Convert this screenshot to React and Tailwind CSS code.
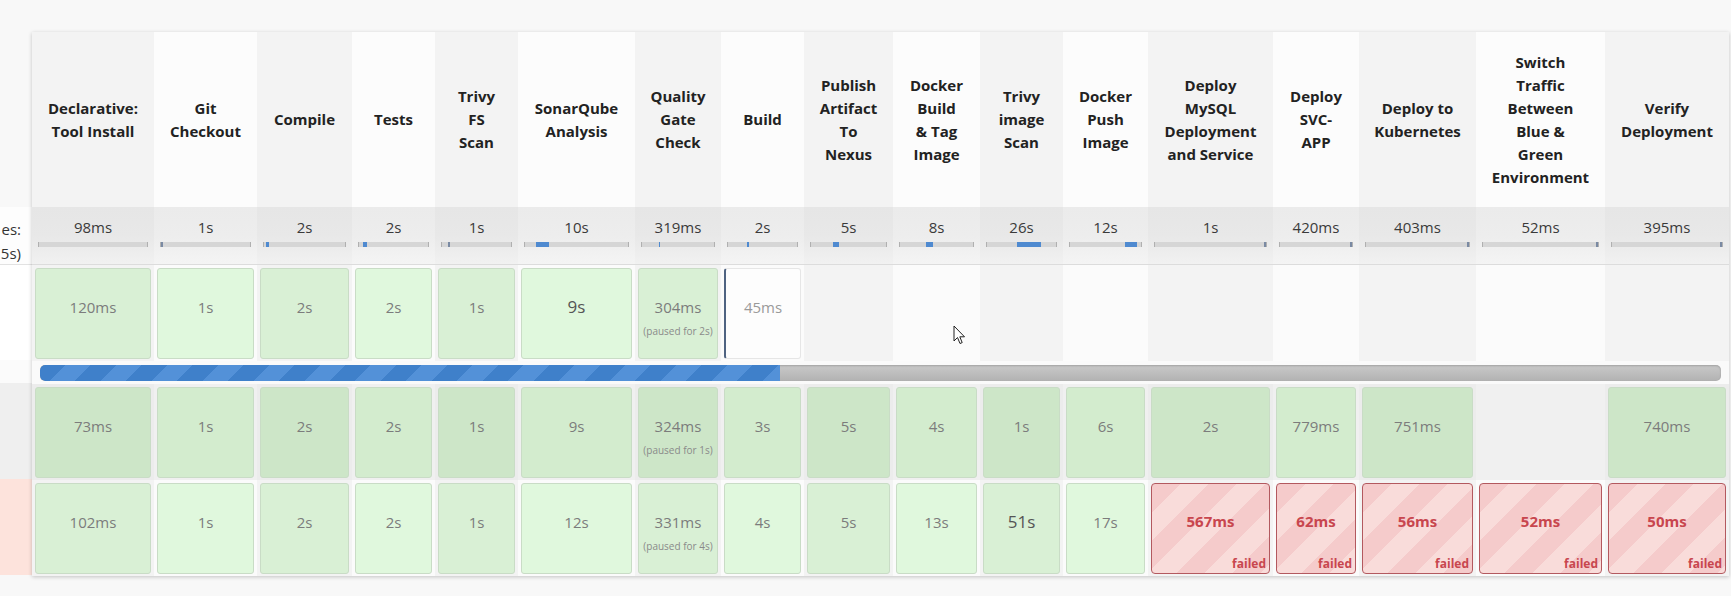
import React from "react";

const cols = [
  { name: ["Declarative:", "Tool Install"], avg: "98ms", mark: null },
  { name: ["Git", "Checkout"], avg: "1s", mark: [0, 2, true] },
  { name: ["Compile"], avg: "2s", mark: [2, 3] },
  { name: ["Tests"], avg: "2s", mark: [6, 4] },
  { name: ["Trivy", "FS", "Scan"], avg: "1s", mark: [8, 2, true] },
  { name: ["SonarQube", "Analysis"], avg: "10s", mark: [11, 13] },
  { name: ["Quality", "Gate", "Check"], avg: "319ms", mark: [24, 1] },
  { name: ["Build"], avg: "2s", mark: [27, 2] },
  { name: ["Publish", "Artifact", "To", "Nexus"], avg: "5s", mark: [29, 6] },
  { name: ["Docker", "Build", "& Tag", "Image"], avg: "8s", mark: [36, 7] },
  { name: ["Trivy", "image", "Scan"], avg: "26s", mark: [44, 24] },
  { name: ["Docker", "Push", "Image"], avg: "12s", mark: [78, 12] },
  { name: ["Deploy", "MySQL", "Deployment", "and Service"], avg: "1s", mark: [98, 2, true] },
  { name: ["Deploy", "SVC-", "APP"], avg: "420ms", mark: [97, 2, true] },
  { name: ["Deploy to", "Kubernetes"], avg: "403ms", mark: [98, 2, true] },
  { name: ["Switch", "Traffic", "Between", "Blue &", "Green", "Environment"], avg: "52ms", mark: [98, 2, true] },
  { name: ["Verify", "Deployment"], avg: "395ms", mark: [98, 2, true] },
];

const row1 = [
  { t: "120ms" }, { t: "1s" }, { t: "2s" }, { t: "2s" }, { t: "1s" },
  { t: "9s", big: true }, { t: "304ms", p: "(paused for 2s)" }, { t: "45ms", run: true },
  null, null, null, null, null, null, null, null, null,
];
const row2 = [
  { t: "73ms" }, { t: "1s" }, { t: "2s" }, { t: "2s" }, { t: "1s" },
  { t: "9s" }, { t: "324ms", p: "(paused for 1s)" }, { t: "3s" }, { t: "5s" }, { t: "4s" },
  { t: "1s" }, { t: "6s" }, { t: "2s" }, { t: "779ms" }, { t: "751ms" }, null, { t: "740ms" },
];
const row3 = [
  { t: "102ms" }, { t: "1s" }, { t: "2s" }, { t: "2s" }, { t: "1s" },
  { t: "12s" }, { t: "331ms", p: "(paused for 4s)" }, { t: "4s" }, { t: "5s" }, { t: "13s" },
  { t: "51s", big: true }, { t: "17s" },
  { t: "567ms", fail: true }, { t: "62ms", fail: true }, { t: "56ms", fail: true },
  { t: "52ms", fail: true }, { t: "50ms", fail: true },
];

const progress = 44;

function StageCell({ cell, idx, dark }) {
  const odd = idx % 2 === 0;
  const colBg = dark
    ? odd ? "bg-[#ececec]" : "bg-[#f0f0f0]"
    : odd ? "bg-[#f3f3f3]" : "bg-[#fbfbfb]";
  if (!cell) return <div className={"h-[96px] " + colBg} />;

  let inner;
  if (cell.fail) {
    inner = (
      <div className="relative h-full rounded-[4px] border border-[#b3595f] bg-[repeating-linear-gradient(135deg,#f5cbcb_0px,#f5cbcb_20px,#f9dcda_20px,#f9dcda_40px)] pt-[26px] text-center">
        <div className="text-[15px] font-bold leading-[22px] text-[#c8464e]">{cell.t}</div>
        <div className="absolute bottom-[1px] right-[3px] text-[12px] font-bold leading-[16px] text-[#c8464e]">failed</div>
      </div>
    );
  } else if (cell.run) {
    inner = (
      <div className="h-full rounded-[3px] border border-[#e6e6e6] border-l-2 border-l-[#4f6381] bg-[#fdfdfd] pt-[27px] text-center">
        <div className="text-[15px] leading-[22px] text-[#9a9a9a]">{cell.t}</div>
      </div>
    );
  } else {
    const green = dark
      ? odd ? "bg-[#cde6c8]" : "bg-[#d3ecce]"
      : odd ? "bg-[#d9f0d5]" : "bg-[#e0f8dd]";
    inner = (
      <div className={"h-full rounded-[3px] border border-[#c9dcc6] pt-[27px] text-center " + green}>
        <div
          className={
            cell.big
              ? "text-[17px] leading-[22px] text-[#555]"
              : "text-[15px] leading-[22px] text-[#7c7c7c]"
          }
        >
          {cell.t}
        </div>
        {cell.p && (
          <div className="mt-[7px] text-[10px] leading-[12px] text-[#8a8a8a]">{cell.p}</div>
        )}
      </div>
    );
  }
  return <div className={"h-[96px] px-[3px] pt-[3px] pb-[2px] " + colBg}>{inner}</div>;
}

export default function App() {
  return (
    <div className="relative flex h-[596px] w-[1731px] overflow-hidden bg-[#f8f8f8] pt-[32px] font-['Open_Sans',sans-serif]">
      {/* left summary column, only the tail of its labels is in view */}
      <div className="flex w-[32px] shrink-0 flex-col">
        <div className="h-[175px]" />
        <div className="flex h-[58px] flex-col items-end border-b border-[#e2e2e2] bg-[#fdfdfd] pr-[11px] pt-[10px] text-[15px] leading-[24px] text-[#333]">
          <span className="whitespace-nowrap">es:</span>
          <span className="whitespace-nowrap">5s)</span>
        </div>
        <div className="h-[95px] bg-[#ffffff]" />
        <div className="h-[23px] bg-[#fbfbfb]" />
        <div className="h-[96px] bg-[#efefef]" />
        <div className="h-[96px] bg-[#fde3dc]" />
      </div>

      <div className="grid h-fit w-[1697px] shrink-0 grid-cols-[122px_103px_95px_83px_83px_117px_86px_83px_89px_87px_83px_85px_125px_86px_117px_129px_124px] shadow-[0_1px_4px_rgba(0,0,0,0.22)]">
        {cols.map((c, i) => (
          <div
            key={"h" + i}
            className={
              "flex h-[175px] items-center justify-center text-center text-[15px] font-bold leading-[23px] text-[#222] " +
              (i % 2 === 0 ? "bg-[#f3f3f3]" : "bg-[#fcfcfc]")
            }
          >
            <div>
              {c.name.map((l, k) => (
                <div key={k} className="whitespace-nowrap">{l}</div>
              ))}
            </div>
          </div>
        ))}

        {cols.map((c, i) => (
          <div
            key={"a" + i}
            className={
              "h-[58px] border-b border-[#dcdcdc] pt-[9px] text-center " +
              (i % 2 === 0
                ? "bg-gradient-to-b from-[#e6e6e6] via-[#e8e8e8] to-[#f1f1f1]"
                : "bg-gradient-to-b from-[#ebebeb] via-[#ededed] to-[#f4f4f4]")
            }
          >
            <div className="text-[15px] leading-[22px] text-[#3a3a3a]">{c.avg}</div>
            <div className="relative mx-[6px] mt-[4px] h-[5px] border-x border-[#b0b0b0] bg-[#d6d6d6]">
              {c.mark && (
                <div
                  className={"absolute top-0 h-full " + (c.mark[2] ? "bg-[#7a8aa3]" : "bg-[#4f8ad0]")}
                  style={{ left: c.mark[0] + "%", width: c.mark[1] + "px" }}
                />
              )}
            </div>
          </div>
        ))}

        {row1.map((cell, i) => (
          <StageCell key={"r1" + i} cell={cell} idx={i} dark={false} />
        ))}

        <div className="col-span-17 h-[23px] bg-[#fafafa] px-[8px] pt-[4px]">
          <div className="h-[16px] overflow-hidden rounded-[5px] bg-gradient-to-b from-[#c9c9c9] to-[#b2b2b2] shadow-[inset_0_1px_2px_rgba(0,0,0,0.2)]">
            <div
              className="h-full rounded-l-[5px] bg-[repeating-linear-gradient(135deg,#3f80ca_0px,#3f80ca_18px,#5391d8_18px,#5391d8_36px)]"
              style={{ width: progress + "%" }}
            />
          </div>
        </div>

        {row2.map((cell, i) => (
          <StageCell key={"r2" + i} cell={cell} idx={i} dark={true} />
        ))}

        {row3.map((cell, i) => (
          <StageCell key={"r3" + i} cell={cell} idx={i} dark={false} />
        ))}
      </div>

      {/* mouse pointer */}
      <svg className="absolute left-[953px] top-[325px]" width="13" height="20" viewBox="0 0 13 20">
        <path d="M1 1 L1 16 L4.5 12.5 L7 18.5 L9.2 17.6 L6.8 11.8 L11.5 11.8 Z" fill="#fff" stroke="#222" strokeWidth="1" strokeLinejoin="round" />
      </svg>
    </div>
  );
}
